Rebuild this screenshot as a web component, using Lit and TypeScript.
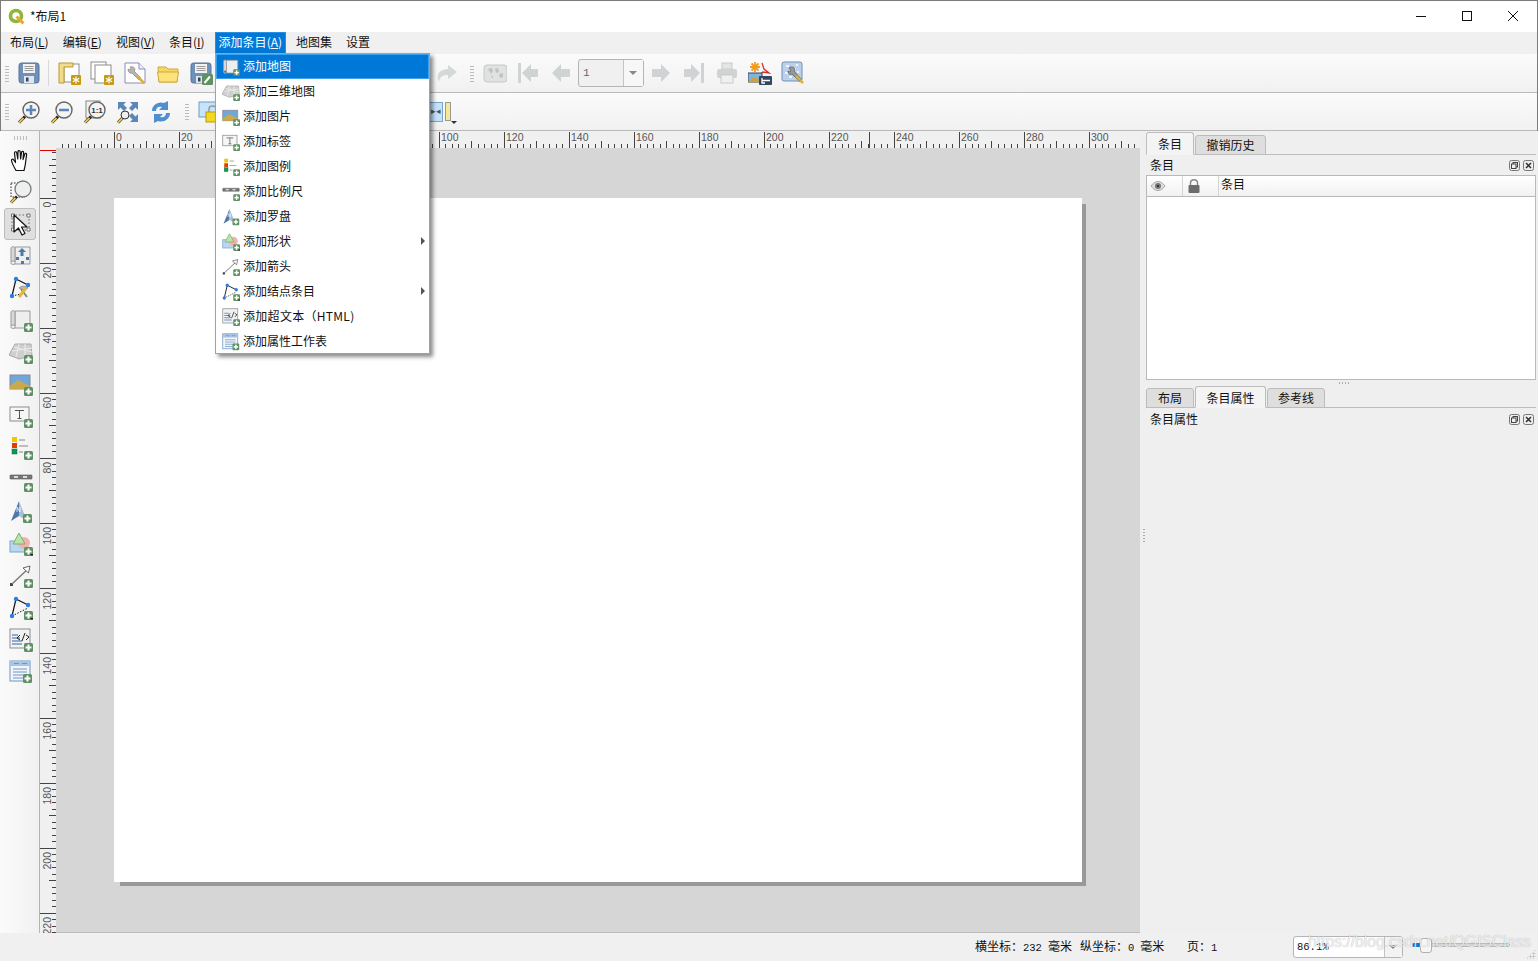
import { LitElement, css, html, svg } from 'lit';
import { customElement } from 'lit/decorators.js';

// small green "add" badge shared by the item icons
const plus = (x = 15, y = 15) => svg`<rect x=${x} y=${y} width="9" height="9" rx="1.5" fill="#5f8f63"/><rect x=${x + 3.5} y=${y + 1.5} width="2" height="6" fill="#fff"/><rect x=${x + 1.5} y=${y + 3.5} width="6" height="2" fill="#fff"/>`;
const star = svg`<rect x="14" y="14" width="10" height="10" rx="1" fill="#c79a10"/><path d="M19 15.5v7M15.8 17.2l6.4 3.6M22.2 17.2l-6.4 3.6" stroke="#fff" stroke-width="1.2"/>`;
const lensHandle = svg`<path d="M2 22.5l6-6" stroke="#222" stroke-width="3"/><path d="M2 22.5l4.5-4.5" stroke="#e8c34a" stroke-width="2"/>`;
const lens = (inner: unknown) => svg`${lensHandle}<circle cx="14" cy="10" r="8" fill="#f4f4f4" stroke="#666" stroke-width="1.4"/>${inner}`;
const floppy = svg`<rect x="2" y="2" width="20" height="20" rx="2.5" fill="#6f90b8" stroke="#55749b"/><rect x="6" y="3" width="12" height="9" fill="#f2f2f2"/><path d="M7.5 5.5h9M7.5 7.5h9M7.5 9.5h9" stroke="#9a9a9a"/><rect x="7" y="15" width="10" height="7" fill="#dfe6ee"/><rect x="9" y="16.5" width="2.5" height="4" fill="#33465f"/>`;
const sheet = (x: number, y: number, w: number, h: number) => svg`<rect x=${x} y=${y} width=${w} height=${h} fill="#fff" stroke="#8d8d8d"/>`;
const scroll = svg`<path d="M6 3h15v17H6z" fill="#eee" stroke="#999"/><path d="M2 4.500C2 2 6 2 6 4.500V18c-1-1.500-3-1.500-4 .5zM2 19c0 1.500 2 2 4 1" fill="#d8d8d8" stroke="#999"/>`;
const grayArrow = (d: string) => svg`<path d=${d} fill="#cfd3d3"/>`;
const dots = svg`<circle cx="7" cy="3" r="2.200" fill="#2f7be0"/><circle cx="19" cy="9" r="2.200" fill="#2f7be0"/><circle cx="3" cy="20" r="2.200" fill="#2f7be0"/>`;

const icons: Record<string, unknown> = {
  save: floppy,
  newLayout: svg`${sheet(7, 3, 15, 18)}<path d="M2 2h14v4H7v16H2z" fill="#f0dc8c" stroke="#b9992c"/>${star}`,
  dupLayout: svg`${sheet(1, 1, 15, 17)}${sheet(5, 4, 16, 18)}${star}`,
  manager: svg`<path d="M2 2h14l6 6v14H2z" fill="#fff" stroke="#8d8db5"/><path d="M16 2v6h6" fill="#eef" stroke="#8d8db5"/><path d="M7 6c2-1 5 0 5 3l-1 1 7 7-2 2-7-7c-2 1-4-1-4-4l2 1 1-1z" fill="#b5b5b5" stroke="#777" stroke-width=".6"/><path d="M14 15l7 7" stroke="#d9b23a" stroke-width="2.500"/>`,
  folder: svg`<path d="M2 6h8l2 2h10l-1 13H3z" fill="#f6d860" stroke="#cfa93a"/><path d="M1.500 11h21L21 21H3z" fill="#fbe27a" stroke="#cfa93a"/>`,
  saveAs: svg`${floppy}<rect x="13" y="13" width="11" height="11" rx="1.500" fill="#5f8f63"/><path d="M15.500 22l5.500-6.500" stroke="#fff" stroke-width="2"/>`,
  redo: svg`<path d="M14 4l9 7-9 7v-4c-5 0-8 1-9 7-3-7-1-12 9-13z" fill="#d5d8d8"/>`,
  atlas: svg`<rect x="1" y="4" width="23" height="17" rx="3" fill="#e0e2e2" stroke="#c6c8c8"/><path d="M5 8l4-1 1 3-2 3zM12 8l3-1 1 4-3 1zM16 13l4-1 0 4-3 1zM8 15l2 0 0 3z" fill="#bfc2c2"/>`,
  first: svg`<rect x="2" y="2" width="3" height="20" fill="#cfd3d3"/>${grayArrow('M6 12l9-9v5h7v8h-7v5z')}`,
  prev: grayArrow('M3 12l9-9v5h9v8h-9v5z'),
  next: grayArrow('M21 12l-9-9v5H3v8h9v5z'),
  last: svg`<rect x="19" y="2" width="3" height="20" fill="#cfd3d3"/>${grayArrow('M18 12l-9-9v5H2v8h7v5z')}`,
  print: svg`<rect x="7" y="2" width="10" height="6" fill="#e4e6e6" stroke="#c8caca"/><rect x="2" y="8" width="20" height="9" rx="2" fill="#d0d3d3"/><rect x="6" y="14" width="12" height="8" fill="#f0f0f0" stroke="#c8caca"/>`,
  exportImg: svg`<path d="M7 1v10M2 6h10M3.500 2.500l7 7M10.500 2.500l-7 7" stroke="#f29b1d" stroke-width="1.800"/><path d="M14 2l2 6 5 4-6-1-4 3" fill="none" stroke="#d9332a" stroke-width="1.300"/><rect x="0" y="12" width="14" height="9" fill="#7fb3e0" stroke="#445"/><path d="M0 21l5-5 9 3v2z" fill="#c9a43c"/><rect x="11" y="15" width="13" height="9" rx="1" fill="#33465f"/><path d="M14 17v5h3M14 19.500h8" stroke="#fff" stroke-width="1.300" fill="none"/>`,
  settings: svg`<rect x="1" y="1" width="20" height="19" rx="2" fill="#bcd0ea" stroke="#6f8fb8"/><path d="M5 5h3M12 8h3M4 12h3M15 4h2M8 16h3M16 11h2" stroke="#fff" stroke-width="1.500"/><path d="M8 7c2-2 5-1 6 1l-1 2 8 9-2 2-8-8c-2 1-4 0-4-3l2 1 1-1z" fill="#999" stroke="#444" stroke-width=".6"/><path d="M15 15l7 7" stroke="#d9b23a" stroke-width="2.500"/>`,
  zoomIn: lens(svg`<path d="M14 5v10M9 10h10" stroke="#5d86b8" stroke-width="2.500"/>`),
  zoomOut: lens(svg`<path d="M9 10h10" stroke="#5d86b8" stroke-width="2.500"/>`),
  zoom100: svg`<rect x="3" y="1" width="14" height="17" fill="#f2f2f2" stroke="#888"/>${lens(svg`<text x="14" y="13" font-size="8" font-weight="700" text-anchor="middle" font-family="Liberation Sans" fill="#333">1:1</text>`)}`,
  zoomFull: svg`<path d="M2 2h8L7.500 4.500 11 8 8 11 4.500 7.500 2 10zM22 2v8l-2.500-2.500L16 11l-3-3 3.500-3.500L14 2zM22 22h-8l2.500-2.500L13 16l3-3 3.500 3.500L22 14z" fill="#5d86b8"/>${lensHandle}<circle cx="9" cy="15" r="4" fill="#eee" stroke="#333"/>`,
  refresh: svg`<path d="M3 11C3 5 9 1 15 3l4-2v9h-9l3-3c-4-1-6 1-6 4z" fill="#4f8fd0"/><path d="M21 13c0 6-6 10-12 8l-4 2v-9h9l-3 3c4 1 6-1 6-4z" fill="#4f8fd0"/>`,
  lockItems: svg`<rect x="1" y="2" width="17" height="15" fill="#c7e3fa" stroke="#6f9dc6"/><path d="M11 13V9c0-4 7-4 7 0v4" fill="none" stroke="#999" stroke-width="1.500"/><rect x="8" y="12" width="14" height="10" fill="#f3d820" stroke="#b59c10"/>`,
  pan: svg`<path d="M7 22.500C5 19 3 15 2.500 12.500c-.2-1.500 1.500-1.700 2.300-.5l1.700 2.500-1-9.500c-.1-1.500 1.900-1.700 2.200-.3L8.800 11 9 3.600c0-1.400 2-1.400 2.200 0l.4 7.400 1-6.800c.2-1.400 2.100-1 2 .4l-.6 7 1.800-5.500c.4-1.200 2-.8 1.800.6L16.500 15c-.3 3-1 5.500-1.500 7.500z" fill="#fff" stroke="#111" stroke-width="1.200" stroke-linejoin="round"/>`,
  zoomArea: svg`<rect x="2" y="3" width="14" height="14" fill="none" stroke="#222" stroke-dasharray="1.500 1.500"/>${lensHandle}<circle cx="14" cy="9" r="8" fill="#eef0f0" stroke="#777" stroke-width="1.300"/>`,
  select: svg`<rect x="3" y="3" width="17" height="15" fill="none" stroke="#666" stroke-dasharray="1.500 2"/><path d="M2.500 2h3v3h-3zM18 2h3v3h-3zM2.500 16h3v3h-3zM18 16h3v3h-3z" fill="#fff" stroke="#555" stroke-width=".8"/><path d="M5 3v17l4.500-4 3.500 7 3-1.500-3.500-6.500H18z" fill="#fff" stroke="#111" stroke-width="1.200" stroke-linejoin="round"/>`,
  moveContent: svg`${scroll}<path d="M13 4l4 4h-2.500v4h-3V8H9z" fill="#4f78a8"/><rect x="7" y="13" width="3" height="3" fill="#4f78a8"/><rect x="17" y="13" width="3" height="3" fill="#4f78a8"/><rect x="12" y="17" width="3" height="3" fill="#4f78a8"/>`,
  editNodes: svg`<path d="M7 3L19 9M7 3L3 20" stroke="#111" stroke-width="1.200"/><path d="M3 20l9-2" stroke="#111" stroke-dasharray="1.500 1.500"/>${dots}<path d="M10 12c3-3 7-2 9 0l-3 1-1 1z" fill="#bbb" stroke="#777" stroke-width=".6"/><path d="M18 21l-6-8" stroke="#888" stroke-width="2"/><path d="M10 21l7-9" stroke="#e0b93a" stroke-width="3"/>`,
  addMap: svg`${scroll}${plus()}`,
  add3d: svg`<path d="M6 4h16l1 12-13 3-10-4z" fill="#cfcfcf" stroke="#aaa"/><path d="M3 11l20-3M5 7l18 5M10 4l-3 13M16 4l0 13" stroke="#eee"/>${plus()}`,
  addImage: svg`<rect x="1" y="3" width="20" height="14" fill="#6fa8d8" stroke="#889"/><path d="M1 14l8-6 12 6v3H1z" fill="#c9a94c"/>${plus()}`,
  addLabel: svg`<rect x="1" y="3" width="19" height="14" fill="#f6f6f6" stroke="#8d8d8d"/><path d="M6 6.500h9M10.500 6.500v8M8.500 14.500h4" stroke="#555" stroke-width="1" fill="none"/>${plus()}`,
  addLegend: svg`<rect x="3" y="1" width="5" height="5" fill="#f7c300"/><rect x="3" y="7" width="5" height="5" fill="#e33b00"/><rect x="3" y="13" width="5" height="5" fill="#0c9a4f" stroke="#064" stroke-width=".5"/><path d="M10 4h6M10 10h9M10 16h4" stroke="#aaa" stroke-width="1.500"/>${plus()}`,
  addScale: svg`<rect x="1" y="7" width="22" height="4" rx=".5" fill="#777" stroke="#555" stroke-width=".6"/><path d="M5 9h4M14 9h4" stroke="#fff" stroke-width="1.500"/>${plus()}`,
  addNorth: svg`<path d="M10 1L2 21l8-5z" fill="#4f78a8"/><path d="M10 1l8 20-8-5z" fill="#a7bfdc"/><path d="M8 12V7l3 5V7" fill="none" stroke="#fff" stroke-width=".8"/>${plus(14, 14)}`,
  addShape: svg`<rect x="1" y="9" width="17" height="11" fill="#b9d7f0" stroke="#7aa6cc"/><circle cx="15" cy="11" r="6" fill="#f3b0ac"/><path d="M10 1l6 11H4z" fill="#b8e6a8" stroke="#7fae70"/>${plus()}<path d="M21 22h4l-2 2z" fill="#222"/>`,
  addArrow: svg`<rect x="1" y="19" width="3" height="3" fill="#444"/><path d="M3 20L20 4" stroke="#777" stroke-width="1.300"/><path d="M21 2l-1.500 7L14 4z" fill="#fff" stroke="#666"/>${plus()}`,
  addNodes: svg`<path d="M7 3L19 9M7 3L3 20" stroke="#111" stroke-width="1.200"/><path d="M3 20l16-8" stroke="#111" stroke-dasharray="1.500 1.500"/>${dots}${plus()}<path d="M21 22h4l-2 2z" fill="#222"/>`,
  addHtml: svg`<rect x="1" y="1" width="20" height="19" fill="#f2f2f2" stroke="#8d8d8d"/><path d="M3 7h6M3 10h8M3 13h10M3 16h10" stroke="#6f95c5" stroke-width="1.500"/><path d="M11 7l-3 3 3 2M16 5l-3 8M17 7l3 2-3 3" fill="none" stroke="#222"/>${plus()}`,
  addTable: svg`<rect x="1" y="1" width="20" height="20" fill="#f2f6fb" stroke="#6f95c5"/><rect x="1" y="1" width="20" height="5" fill="#a8c4e6"/><path d="M5 3.500h5M13 3.500h5M4 9h14M4 12h14M4 15h14M4 18h14" stroke="#6f95c5"/>${plus(14, 14)}`,
};

const icon = (name: string, size = 24) =>
  html`<svg width=${size} height=${size} viewBox="0 0 24 24">${icons[name]}</svg>`;

// top and left rulers: 3.25px per mm, ticks every 2mm
const PX_PER_MM = 3.25;
const ORIGIN_X = 74;
const ORIGIN_Y = 50;
const crisp = (v: number) => Math.floor(v) + 0.5;

function topRuler() {
  const marks = [];
  for (let mm = -18; mm <= 316; mm += 2) {
    const x = crisp(ORIGIN_X + mm * PX_PER_MM);
    if (x < 16) continue;
    const top = mm % 20 === 0 ? 1 : mm % 10 === 0 ? 10 : 13;
    marks.push(svg`<line x1=${x} x2=${x} y1=${top} y2="17" stroke="#444"/>`);
    if (mm % 20 === 0 && mm >= 0) marks.push(svg`<text x=${x + 1.5} y="10" class="rt">${mm}</text>`);
  }
  return html`<svg class="rule-top" width="1100" height="17">${marks}<line x1="829.500" x2="829.500" y1="1" y2="17" stroke="#e00000"/></svg>`;
}

function leftRuler() {
  const marks = [];
  for (let mm = -14; mm <= 226; mm += 2) {
    const y = crisp(ORIGIN_Y + mm * PX_PER_MM);
    const left = mm % 20 === 0 ? 0 : mm % 10 === 0 ? 9 : 12;
    marks.push(svg`<line x1=${left} x2="16" y1=${y} y2=${y} stroke="#444"/>`);
    if (mm % 20 === 0 && mm >= 0) {
      const ty = y + 3 + String(mm).length * 6;
      marks.push(svg`<text transform="translate(11 ${ty}) rotate(-90)" class="rt">${mm}</text>`);
    }
  }
  return html`<svg class="rule-left" width="16" height="785"><line x1="0" x2="16" y1="2.500" y2="2.500" stroke="#e00000"/>${marks}</svg>`;
}

const MENUS: [string, string?][] = [
  ['布局', 'L'], ['编辑', 'E'], ['视图', 'V'], ['条目', 'I'], ['添加条目', 'A'], ['地图集'], ['设置'],
];

const MENU_ITEMS = [
  ['addMap', '添加地图'], ['add3d', '添加三维地图'], ['addImage', '添加图片'], ['addLabel', '添加标签'],
  ['addLegend', '添加图例'], ['addScale', '添加比例尺'], ['addNorth', '添加罗盘'], ['addShape', '添加形状', 'sub'],
  ['addArrow', '添加箭头'], ['addNodes', '添加结点条目', 'sub'], ['addHtml', '添加超文本（HTML)'], ['addTable', '添加属性工作表'],
];

const SIDE_TOOLS = ['pan', 'zoomArea', 'select', 'moveContent', 'editNodes', 'addMap', 'add3d', 'addImage', 'addLabel',
  'addLegend', 'addScale', 'addNorth', 'addShape', 'addArrow', 'addNodes', 'addHtml', 'addTable'];

@customElement('app-root')
export class AppRoot extends LitElement {
  static override styles = css`
    :host {
      display: block;
      width: 1538px;
      height: 961px;
      overflow: hidden;
      font-family: "Noto Sans CJK SC", "Liberation Sans", sans-serif;
      font-size: 12px;
      color: #111;
    }
    .win {
      position: relative;
      display: flex;
      flex-direction: column;
      height: 961px;
      background: #f0f0f0;
      outline: 1px solid #7c7c7c;
      outline-offset: -1px;
    }
    .title {
      flex: 0 0 32px;
      display: flex;
      align-items: center;
      background: #fff;
      padding-left: 8px;
    }
    .logo { margin-right: 5px; }
    .title-text { flex: 1; font-size: 12px; margin-top: -2px; }
    .caption {
      width: 46px;
      height: 32px;
      display: flex;
      align-items: center;
      justify-content: center;
    }
    .caption-last { margin-right: 2px; }
    .menubar {
      flex: 0 0 22px;
      display: flex;
      gap: 6px;
      padding-left: 6px;
      background: #f0f0f0;
      line-height: 20px;
      box-sizing: border-box;
    }
    .menubar span { padding: 0 4px 1px; }
    .menubar .open { background: #0078d7; color: #fff; box-shadow: inset 0 0 0 1px #2a8fe0; }
    .tools {
      display: flex;
      align-items: center;
      box-sizing: border-box;
      background: linear-gradient(#fbfbfb, #f1f1f1);
      border-bottom: 1px solid #b9b9b9;
      padding-left: 5px;
    }
    .t1 { flex: 0 0 39px; }
    .t2 { flex: 0 0 38px; }
    .grip {
      width: 4px;
      height: 17px;
      margin-right: 3px;
      background-image: radial-gradient(#bbb 45%, transparent 50%);
      background-size: 2px 3px;
      flex: none;
    }
    .grip-wide { margin-left: 8px; margin-right: 4px; }
    .btn {
      width: 33px;
      height: 30px;
      flex: none;
      display: flex;
      align-items: center;
      justify-content: center;
    }
    .sep { width: 7px; height: 26px; flex: none; position: relative; }
    .sep::before { content: ""; position: absolute; left: 3px; top: 0; bottom: 0; width: 1px; background: #d8d8d8; }
    .hidden-run { width: 212px; flex: none; }
    .hidden-run2 { width: 203px; flex: none; }
    .combo {
      width: 66px;
      height: 28px;
      margin-left: 1px;
      box-sizing: border-box;
      flex: none;
      display: flex;
      border: 1px solid #b5b5b5;
      border-radius: 3px;
      background: #f0f0f0;
      font: 11px "Liberation Mono", monospace;
      color: #666;
    }
    .combo b { flex: 1; font-weight: 400; line-height: 26px; padding-left: 4px; }
    .combo i {
      width: 19px;
      border-left: 1px solid #c4c4c4;
      background: #f7f7f7;
      position: relative;
    }
    .combo i::after, .zoom-box i::after {
      content: "";
      position: absolute;
      left: 5px;
      top: 11px;
      border: 4px solid transparent;
      border-top-color: #888;
      border-bottom: 0;
    }
    .align { width: 14px; height: 20px; background: #c4e2fa; border: 1px solid #7aa6cc; box-sizing: border-box; flex: none; text-align: center; line-height: 16px; font-size: 9px; color: #555; }
    .guide { width: 6px; height: 19px; background: #f2e896; border: 1px solid #999; box-sizing: border-box; margin-left: 2px; flex: none; }
    .caret { width: 0; height: 0; border: 3px solid transparent; border-top-color: #333; border-bottom: 0; align-self: flex-end; margin-bottom: 6px; flex: none; }
    .main { flex: 0 0 802px; display: flex; min-height: 0; }
    .side {
      width: 40px;
      flex: none;
      box-sizing: border-box;
      border-right: 1px solid #b4b4b4;
      background: linear-gradient(90deg, #fbfbfb, #f1f1f1);
      padding-top: 13px;
      position: relative;
    }
    .side-grip {
      position: absolute;
      left: 13px;
      top: 5px;
      width: 16px;
      height: 4px;
      background-image: radial-gradient(#bbb 45%, transparent 50%);
      background-size: 3px 2px;
    }
    .side-btn {
      height: 32px;
      width: 32px;
      margin-left: 4px;
      box-sizing: border-box;
      display: flex;
      align-items: center;
      justify-content: center;
      border-radius: 3px;
    }
    .side-btn svg { margin-left: 2px; }
    .side-btn.on { background: #dfdfdf; border: 1px solid #bdbdbd; }
    .center {
      flex: 0 0 1100px;
      display: grid;
      grid-template-columns: 16px 1fr;
      grid-template-rows: 17px 1fr;
      min-height: 0;
    }
    .rule-top, .rule-left { background: #f0f0f0; display: block; }
    .rt { font: 10.500px "Liberation Sans", sans-serif; fill: #555; }
    .rule-top { grid-column: 1 / 3; grid-row: 1; }
    .rule-left { grid-row: 2; grid-column: 1; }
    .canvas {
      grid-row: 2;
      grid-column: 2;
      background: #d6d6d6;
      border-bottom: 1px solid #bcbcbc;
      padding: 50px 0 0 58px;
      overflow: hidden;
    }
    .page { width: 968px; height: 684px; background: #fff; box-shadow: 5px 5px 0 -1px #999; }
    .right {
      flex: 1;
      min-width: 0;
      background: #efefef;
      padding: 0 2px 0 6px;
      position: relative;
      display: flex;
      flex-direction: column;
    }
    .vgrip {
      position: absolute;
      left: 3px;
      top: 397px;
      width: 2px;
      height: 14px;
      background-image: radial-gradient(#aaa 45%, transparent 50%);
      background-size: 2px 3px;
    }
    .tabs { display: flex; align-items: flex-end; border-bottom: 1px solid #bcbcbc; box-sizing: border-box; height: 24px; flex: none; }
    .tabs.low { height: 22px; }
    .tab {
      box-sizing: border-box;
      height: 20px;
      margin-bottom: -1px;
      margin-left: 1px;
      background: #dedede;
      border: 1px solid #bcbcbc;
      border-radius: 3px 3px 0 0;
      text-align: center;
      line-height: 18px;
    }
    .tab.on { height: 23px; background: #f4f4f4; border-bottom-color: #f4f4f4; margin-left: 0; line-height: 22px; }
    .tabs.low .tab.on { height: 22px; margin-left: 1px; line-height: 21px; }
    .tabs.low .tab:first-child { margin-left: 0; }
    .w48 { width: 48px; }
    .w71 { width: 71px; }
    .w58 { width: 58px; }
    .dock-title { height: 20px; flex: none; display: flex; align-items: center; padding-left: 4px; margin-right: -1px; }
    .dock-title span { flex: 1; margin-top: -2px; }
    .dock-title.low { height: 22px; }
    .dock-btn { width: 11px; height: 11px; margin-right: 3px; display: block; }
    .table { height: 205px; flex: none; background: #fff; border: 1px solid #b9b9b9; box-sizing: border-box; }
    .thead { display: flex; height: 21px; background: linear-gradient(#fff, #f1f1f1); border-bottom: 1px solid #b9b9b9; box-sizing: border-box; }
    .thead div { display: flex; align-items: center; box-sizing: border-box; border-right: 1px solid #d4d4d4; }
    .c1 { width: 36px; padding-left: 3px; }
    .c2 { width: 36px; padding-left: 4px; }
    .thead .c3 { flex: 1; padding-left: 2px; border: 0; align-items: flex-start; line-height: 16px; }
    .hgrip { height: 6px; flex: none; position: relative; }
    .hgrip::after {
      content: "";
      position: absolute;
      left: 192px;
      top: 2px;
      width: 12px;
      height: 2px;
      background-image: radial-gradient(#aaa 45%, transparent 50%);
      background-size: 3px 2px;
    }
    .status {
      flex: 1;
      display: flex;
      align-items: center;
      padding-left: 975px;
      background: #f0f0f0;
      position: relative;
      font-size: 12px;
    }
    .status .num { font: 10.500px "Liberation Mono", monospace; margin-right: 6px; }
    .sx, .sy, .sp { flex: none; margin-top: -3px; }
    .sx { width: 105px; }
    .sy { width: 107px; }
    .sp { width: 106px; }
    .zoom-box {
      width: 110px;
      height: 22px;
      box-sizing: border-box;
      flex: none;
      display: flex;
      background: #fff;
      border: 1px solid #b5b5b5;
      border-radius: 3px;
      margin-top: -1px;
      font: 10.500px "Liberation Mono", monospace;
    }
    .zoom-box b { flex: 1; font-weight: 400; line-height: 20px; padding-left: 3px; }
    .zoom-box i { width: 17px; border-left: 1px solid #c4c4c4; background: #f3f3f3; position: relative; }
    .zoom-box i::after { left: 4px; top: 8px; }
    .slider { width: 98px; height: 4px; margin-left: 9px; background: #d8d8d8; border-radius: 2px; position: relative; flex: none; margin-top: -4px; box-shadow: inset 0 0 0 1px #bbb; }
    .slider::before { content: ""; position: absolute; left: 0; top: 0; width: 10px; height: 4px; background: #0a78d6; border-radius: 2px; }
    .thumb { position: absolute; left: 8px; top: -5px; width: 12px; height: 15px; background: #f6f6f6; border: 1px solid #b0b0b0; border-radius: 3px; box-sizing: border-box; }
    .mark {
      position: absolute;
      left: 1308px;
      top: 0;
      font: 15.700px "Liberation Sans", sans-serif;
      color: rgba(255, 255, 255, 0.8);
      text-shadow: 0 0 1px rgba(0, 0, 0, 0.35);
      white-space: nowrap;
      pointer-events: none;
    }
    .corner-grip {
      position: absolute;
      right: 2px;
      bottom: 2px;
      width: 10px;
      height: 10px;
      background-image: radial-gradient(#bbb 45%, transparent 50%);
      background-size: 3px 3px;
      clip-path: polygon(100% 0, 100% 100%, 0 100%);
    }
    .menu {
      position: absolute;
      left: 215px;
      top: 53px;
      width: 215px;
      height: 301px;
      box-sizing: border-box;
      overflow: hidden;
      background: #fff;
      border: 1px solid #a2a2a2;
      box-shadow: 3px 3px 4px rgba(0, 0, 0, 0.45);
      z-index: 2;
    }
    .menu-item {
      height: 25px;
      box-sizing: border-box;
      display: flex;
      align-items: center;
      padding-left: 6px;
      gap: 3px;
      position: relative;
    }
    .menu-item span { margin-top: -2px; }
    .menu-item:nth-child(11) span { letter-spacing: 0.3px; }
    .menu-item.on { background: #0078d7; color: #fff; box-shadow: inset 0 0 0 1px #3fa0ec; }
    .menu-item.sub::after {
      content: "";
      position: absolute;
      right: 4px;
      top: 8px;
      border: 4px solid transparent;
      border-left-color: #555;
      border-right: 0;
    }
  `;

  private _tool(name: string) {
    return html`<div class="btn">${icon(name)}</div>`;
  }

  private _dockButtons() {
    return html`
      <svg class="dock-btn" viewBox="0 0 11 11"><rect x=".5" y=".5" width="10" height="10" rx="2" fill="#eee" stroke="#777"/><rect x="4" y="2.500" width="4.500" height="4.500" fill="none" stroke="#444"/><rect x="2.500" y="4" width="4.500" height="4.500" fill="#eee" stroke="#444"/></svg>
      <svg class="dock-btn" viewBox="0 0 11 11"><rect x=".5" y=".5" width="10" height="10" rx="2" fill="#eee" stroke="#777"/><path d="M3 3l5 5M8 3l-5 5" stroke="#333" stroke-width="1.600"/></svg>
    `;
  }

  override render() {
    return html`
      <div class="win">
        <div class="title">
          <svg class="logo" width="17" height="17" viewBox="0 0 16 16"><circle cx="7.500" cy="7.500" r="5.200" fill="none" stroke="#8cb63c" stroke-width="3.400"/><path d="M8 8l6.500 6.500" stroke="#e9a825" stroke-width="2.800"/></svg>
          <div class="title-text">*布局1</div>
          <div class="caption"><svg width="12" height="12"><path d="M1 6.500h10" stroke="#111"/></svg></div>
          <div class="caption"><svg width="12" height="12"><rect x="1.500" y="1.500" width="9" height="9" fill="none" stroke="#111"/></svg></div>
          <div class="caption caption-last"><svg width="12" height="12"><path d="M1 1l10 10M11 1L1 11" stroke="#111"/></svg></div>
        </div>

        <div class="menubar">
          ${MENUS.map(([label, key], i) => html`<span class=${i === 4 ? 'open' : ''}>${label}${key ? html`(<u>${key}</u>)` : ''}</span>`)}
        </div>

        <div class="tools t1">
          <div class="grip"></div>
          ${this._tool('save')}
          <div class="sep"></div>
          ${['newLayout', 'dupLayout', 'manager', 'folder', 'saveAs'].map((n) => this._tool(n))}
          <div class="hidden-run"></div>
          ${this._tool('redo')}
          <div class="grip grip-wide"></div>
          ${['atlas', 'first', 'prev'].map((n) => this._tool(n))}
          <div class="combo"><b>1</b><i></i></div>
          ${['next', 'last', 'print', 'exportImg', 'settings'].map((n) => this._tool(n))}
        </div>

        <div class="tools t2">
          <div class="grip"></div>
          ${['zoomIn', 'zoomOut', 'zoom100', 'zoomFull', 'refresh'].map((n) => this._tool(n))}
          <div class="grip grip-wide"></div>
          ${this._tool('lockItems')}
          <div class="hidden-run2"></div>
          <div class="align">▸◂</div>
          <div class="guide"></div>
          <div class="caret"></div>
        </div>

        <div class="main">
          <div class="side">
            <div class="side-grip"></div>
            ${SIDE_TOOLS.map((n) => html`<div class="side-btn ${n === 'select' ? 'on' : ''}">${icon(n)}</div>`)}
          </div>
          <div class="center">
            ${topRuler()}
            ${leftRuler()}
            <div class="canvas"><div class="page"></div></div>
          </div>
          <div class="right">
            <div class="vgrip"></div>
            <div class="tabs">
              <div class="tab on w48">条目</div>
              <div class="tab w71">撤销历史</div>
            </div>
            <div class="dock-title"><span>条目</span>${this._dockButtons()}</div>
            <div class="table">
              <div class="thead">
                <div class="c1"><svg width="16" height="12" viewBox="0 0 16 12"><path d="M1 6c4-6 10-6 14 0-4 6-10 6-14 0z" fill="#ddd" stroke="#aaa"/><circle cx="8" cy="6" r="3" fill="#777"/><circle cx="8" cy="6" r="1" fill="#222"/></svg></div>
                <div class="c2"><svg width="14" height="16" viewBox="0 0 14 16"><path d="M3.500 8V5c0-4.500 7-4.500 7 0v3" fill="none" stroke="#888" stroke-width="1.500"/><rect x="1.500" y="7" width="11" height="8" rx="1" fill="#6c6c6c"/></svg></div>
                <div class="c3">条目</div>
              </div>
            </div>
            <div class="hgrip"></div>
            <div class="tabs low">
              <div class="tab w48">布局</div>
              <div class="tab on w71">条目属性</div>
              <div class="tab w58">参考线</div>
            </div>
            <div class="dock-title low"><span>条目属性</span>${this._dockButtons()}</div>
          </div>
        </div>

        <div class="status">
          <div class="sx">横坐标：<span class="num">232</span>毫米</div>
          <div class="sy">纵坐标：<span class="num">0</span>毫米</div>
          <div class="sp">页：<span class="num">1</span></div>
          <div class="zoom-box"><b>86.1%</b><i></i></div>
          <div class="slider"><div class="thumb"></div></div>
          <div class="mark">https://blog.csdn.net/QGISClass</div>
          <div class="corner-grip"></div>
        </div>

        <div class="menu">
          ${MENU_ITEMS.map(([ic, label, sub], i) => html`
            <div class="menu-item ${i === 0 ? 'on' : ''} ${sub ? 'sub' : ''}">${icon(ic, 18)}<span>${label}</span></div>
          `)}
        </div>
      </div>
    `;
  }
}

declare global {
  interface HTMLElementTagNameMap {
    'app-root': AppRoot;
  }
}
